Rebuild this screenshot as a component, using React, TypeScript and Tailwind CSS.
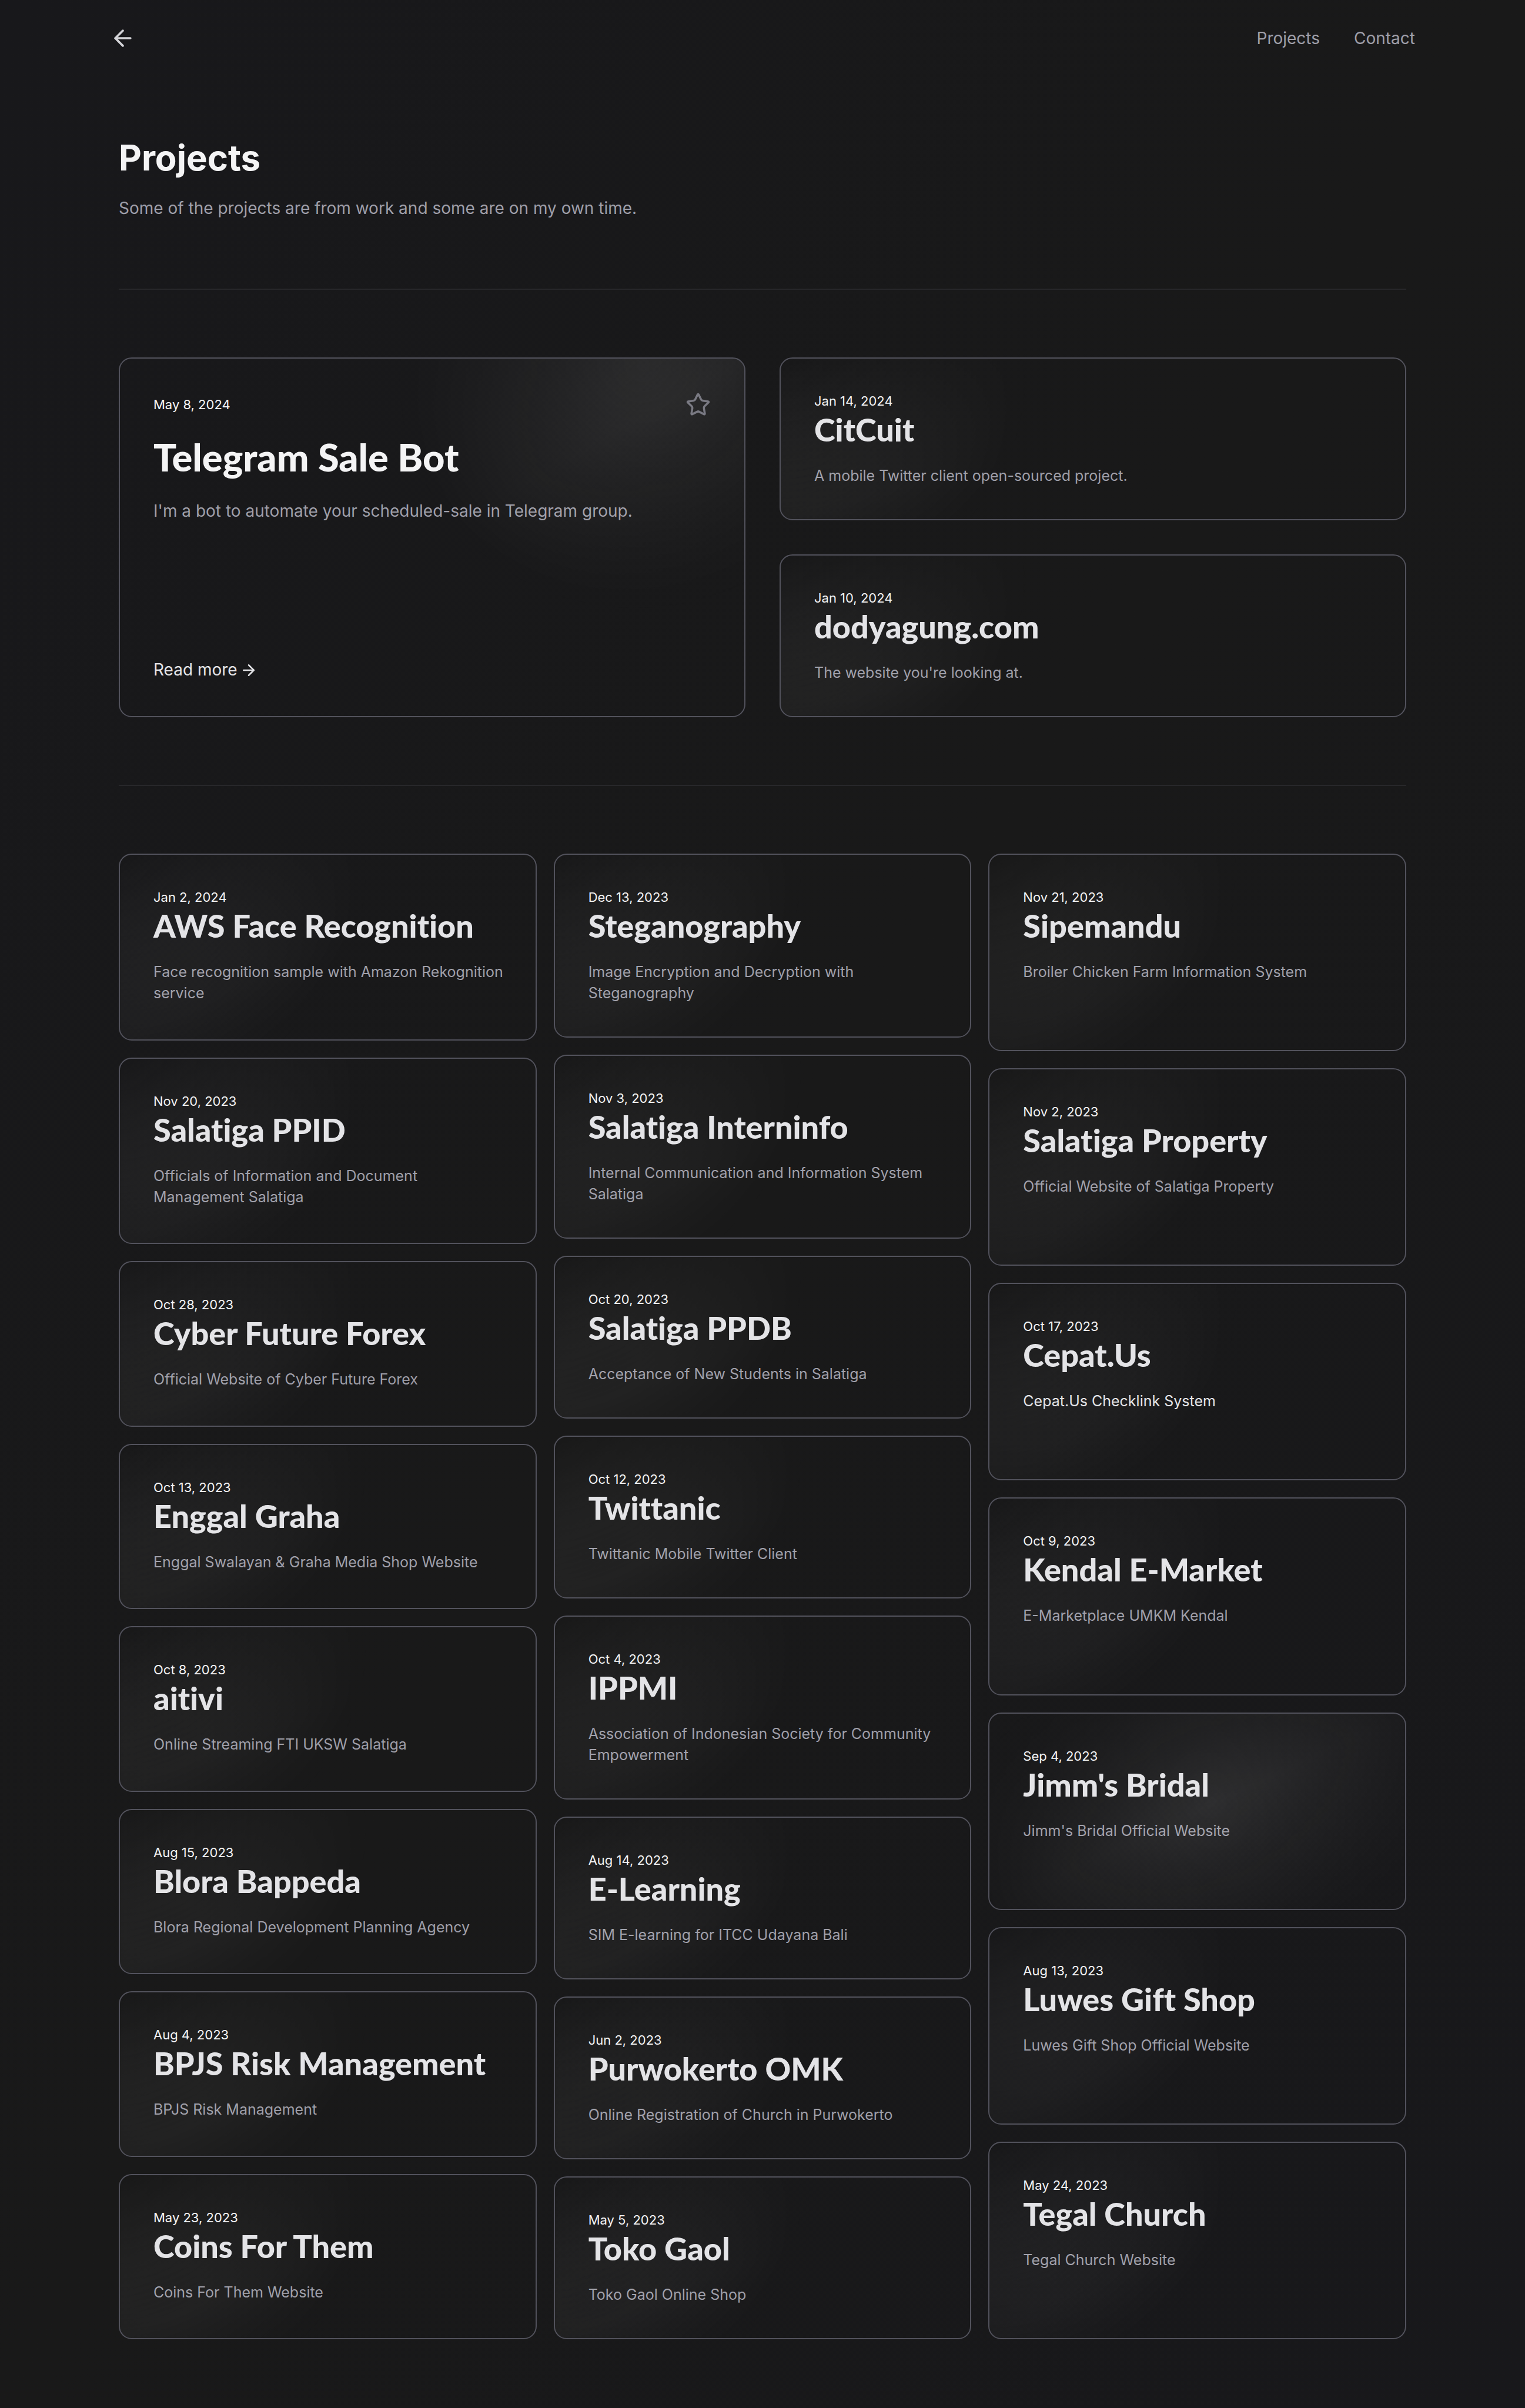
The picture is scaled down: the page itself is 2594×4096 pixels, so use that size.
import { ArrowLeft, ArrowRight, Star } from "lucide-react";

type Project = {
  date: string;
  title: string;
  description: string;
  glow?: string;
  active?: boolean;
};

const CORNER_GLOW =
  "[mask-image:radial-gradient(432px_at_0px_0px,white,transparent)]";
const CENTER_GLOW =
  "[mask-image:radial-gradient(432px_at_376px_150px,white,transparent)]";
const FEATURED_GLOW =
  "[mask-image:radial-gradient(432px_at_890px_10px,white,transparent)]";

const top: Project[] = [
  {
    date: "Jan 14, 2024",
    title: "CitCuit",
    description: "A mobile Twitter client open-sourced project.",
  },
  {
    date: "Jan 10, 2024",
    title: "dodyagung.com",
    description: "The website you're looking at.",
  },
];

const columns: Project[][] = [
  [
    { date: "Jan 2, 2024", title: "AWS Face Recognition", description: "Face recognition sample with Amazon Rekognition service" },
    { date: "Nov 20, 2023", title: "Salatiga PPID", description: "Officials of Information and Document Management Salatiga" },
    { date: "Oct 28, 2023", title: "Cyber Future Forex", description: "Official Website of Cyber Future Forex" },
    { date: "Oct 13, 2023", title: "Enggal Graha", description: "Enggal Swalayan & Graha Media Shop Website" },
    { date: "Oct 8, 2023", title: "aitivi", description: "Online Streaming FTI UKSW Salatiga" },
    { date: "Aug 15, 2023", title: "Blora Bappeda", description: "Blora Regional Development Planning Agency" },
    { date: "Aug 4, 2023", title: "BPJS Risk Management", description: "BPJS Risk Management" },
    { date: "May 23, 2023", title: "Coins For Them", description: "Coins For Them Website" },
  ],
  [
    { date: "Dec 13, 2023", title: "Steganography", description: "Image Encryption and Decryption with Steganography" },
    { date: "Nov 3, 2023", title: "Salatiga Interninfo", description: "Internal Communication and Information System Salatiga" },
    { date: "Oct 20, 2023", title: "Salatiga PPDB", description: "Acceptance of New Students in Salatiga" },
    { date: "Oct 12, 2023", title: "Twittanic", description: "Twittanic Mobile Twitter Client" },
    { date: "Oct 4, 2023", title: "IPPMI", description: "Association of Indonesian Society for Community Empowerment" },
    { date: "Aug 14, 2023", title: "E-Learning", description: "SIM E-learning for ITCC Udayana Bali" },
    { date: "Jun 2, 2023", title: "Purwokerto OMK", description: "Online Registration of Church in Purwokerto" },
    { date: "May 5, 2023", title: "Toko Gaol", description: "Toko Gaol Online Shop" },
  ],
  [
    { date: "Nov 21, 2023", title: "Sipemandu", description: "Broiler Chicken Farm Information System" },
    { date: "Nov 2, 2023", title: "Salatiga Property", description: "Official Website of Salatiga Property" },
    { date: "Oct 17, 2023", title: "Cepat.Us", description: "Cepat.Us Checklink System", active: true },
    { date: "Oct 9, 2023", title: "Kendal E-Market", description: "E-Marketplace UMKM Kendal" },
    { date: "Sep 4, 2023", title: "Jimm's Bridal", description: "Jimm's Bridal Official Website", glow: CENTER_GLOW },
    { date: "Aug 13, 2023", title: "Luwes Gift Shop", description: "Luwes Gift Shop Official Website" },
    { date: "May 24, 2023", title: "Tegal Church", description: "Tegal Church Website" },
  ],
];

function Glow({ mask }: { mask: string }) {
  return (
    <div
      aria-hidden="true"
      className={`pointer-events-none absolute inset-0 bg-linear-to-br from-transparent via-zinc-100/10 to-transparent ${mask}`}
    />
  );
}

function Card({ project }: { project: Project }) {
  return (
    <div className="relative overflow-hidden rounded-[22px] border-2 border-zinc-600">
      <Glow mask={project.glow ?? CORNER_GLOW} />
      <a href="#" className="block">
        <article className="pt-[58px] pr-[48px] pb-[56px] pl-[57px]">
          <time className="block text-[22px] leading-[29px] text-zinc-100">
            {project.date}
          </time>
          <h2 className="font-['Lato',sans-serif] text-[54px] leading-[67px] font-black text-zinc-200 [font-variant-ligatures:none]">
            {project.title}
          </h2>
          <p
            className={
              project.active
                ? "mt-[27px] text-[25px] leading-[36px] text-zinc-200"
                : "mt-[27px] text-[25px] leading-[36px] text-zinc-400"
            }
          >
            {project.description}
          </p>
        </article>
      </a>
    </div>
  );
}

export default function App() {
  return (
    <div className="min-h-screen bg-linear-to-tl from-[#18181b] via-[#191919] to-[#18181b] pb-[115px] font-['Inter',sans-serif]">
      <header className="mx-auto flex max-w-[2306px] items-center justify-between p-[43px]">
        <a href="#" aria-label="Back" className="text-zinc-300">
          <ArrowLeft className="size-[44px]" />
        </a>
        <nav className="flex gap-[58px] text-[28px] leading-[44px] text-zinc-400">
          <a href="#">Projects</a>
          <a href="#">Contact</a>
        </nav>
      </header>

      <main className="mx-auto flex max-w-[2306px] flex-col gap-[115px] px-[58px] pt-[102px]">
        <div>
          <h1 className="text-[60px] leading-[72px] font-bold text-zinc-100">
            Projects
          </h1>
          <p className="mt-[29px] text-[28px] leading-[43px] text-zinc-400">
            Some of the projects are from work and some are on my own time.
          </p>
        </div>

        <div className="h-[2px] bg-zinc-800" />

        <div className="grid grid-cols-2 gap-[58px]">
          <div className="relative overflow-hidden rounded-[22px] border-2 border-zinc-600">
            <Glow mask={FEATURED_GLOW} />
            <a href="#" className="block h-full">
              <article className="flex h-full flex-col p-[57px]">
                <div className="flex items-center justify-between">
                  <time className="text-[22px] leading-[29px] text-zinc-100">
                    May 8, 2024
                  </time>
                  <Star className="size-[43px] text-zinc-500" />
                </div>
                <h2 className="mt-[27px] font-['Lato',sans-serif] text-[65px] leading-[80px] font-black text-zinc-100 [font-variant-ligatures:none]">
                  Telegram Sale Bot
                </h2>
                <p className="mt-[29px] text-[28px] leading-[47px] text-zinc-400">
                  I'm a bot to automate your scheduled-sale in Telegram group.
                </p>
                <p className="mt-auto flex items-center gap-[4px] text-[28px] leading-[43px] text-zinc-200">
                  Read more
                  <ArrowRight aria-hidden="true" className="size-[30px]" />
                </p>
              </article>
            </a>
          </div>
          <div className="flex flex-col gap-[58px]">
            {top.map((project) => (
              <Card key={project.title} project={project} />
            ))}
          </div>
        </div>

        <div className="h-[2px] bg-zinc-800" />

        <div className="grid grid-cols-3 gap-[29px]">
          {columns.map((column, i) => (
            <div key={i} className="grid gap-[29px]">
              {column.map((project) => (
                <Card key={project.title} project={project} />
              ))}
            </div>
          ))}
        </div>
      </main>
    </div>
  );
}
